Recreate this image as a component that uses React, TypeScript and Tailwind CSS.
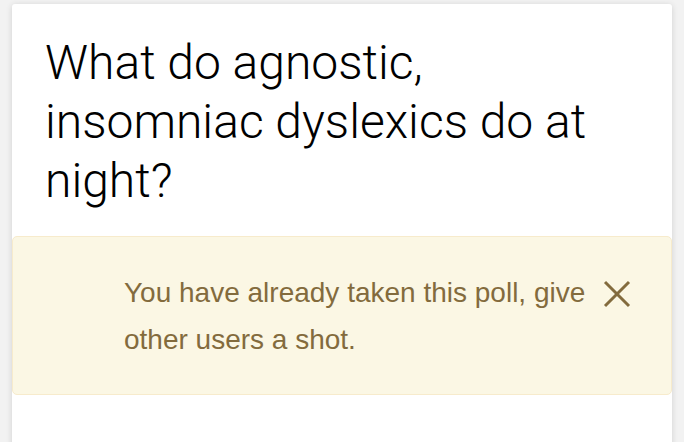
import React from "react";

export default function App() {
  return (
    <div className="w-[684px] h-[442px] bg-[#f2f2f2] overflow-hidden">
      <div className="mx-[12px] mt-[4px] h-[460px] bg-white rounded-[3px] shadow-[0_1px_6px_rgba(0,0,0,0.14)]">
        <h1
          className="pl-[33px] pr-[40px] pt-[29px] text-[48px] leading-[59px] font-light text-black"
          style={{ fontFamily: "Roboto, 'Noto Sans', sans-serif" }}
        >
          What do agnostic, insomniac dyslexics do at night?
        </h1>
        <div className="mt-[26px] flex items-start border border-[#f7ebcc] bg-[#fbf7e4] rounded-[5px] pl-[111px] pr-[40px] pt-[32px] pb-[31px]">
          <p
            className="flex-1 text-[28px] leading-[47px] text-[#836b3d]"
            style={{ fontFamily: "'Liberation Sans', Arial, sans-serif" }}
          >
            You have already taken this poll, give other users a shot.
          </p>
          <button className="mt-[11px] ml-[8px] w-[28px] h-[28px] text-[#836b3d]" aria-label="close">
            <svg width="28" height="28" viewBox="0 0 28 28" fill="none" stroke="currentColor" strokeWidth="3">
              <line x1="2" y1="2" x2="26" y2="26" />
              <line x1="26" y1="2" x2="2" y2="26" />
            </svg>
          </button>
        </div>
      </div>
    </div>
  );
}
